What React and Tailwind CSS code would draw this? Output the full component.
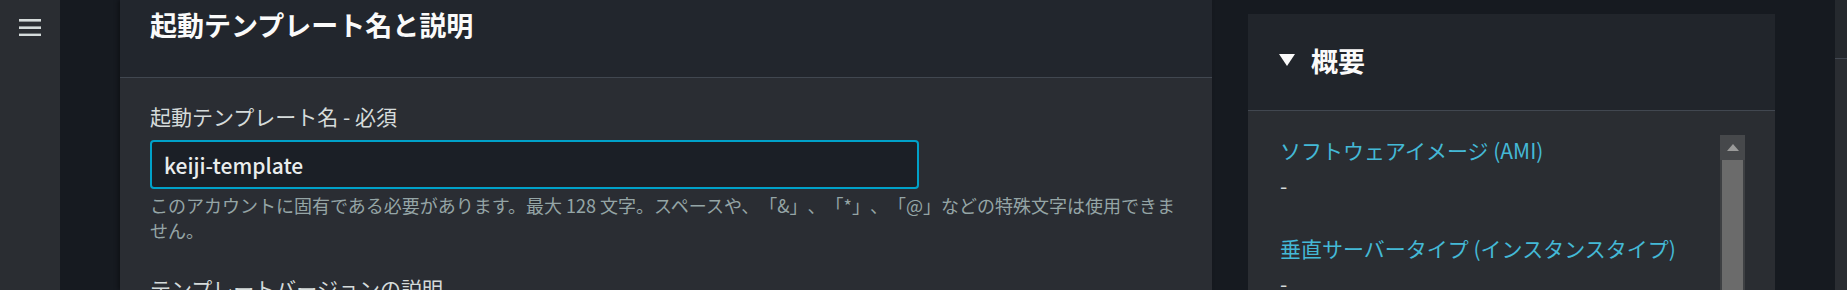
const font = { fontFamily: '"Noto Sans CJK JP", "Noto Sans", sans-serif' };

function Hamburger() {
  return (
    <svg width="22" height="18" viewBox="0 0 22 18" aria-hidden="true">
      <rect x="0" y="1" width="22" height="2.6" fill="#d5dbdb" />
      <rect x="0" y="8.4" width="22" height="2.6" fill="#d5dbdb" />
      <rect x="0" y="15.6" width="22" height="2.6" fill="#d5dbdb" />
    </svg>
  );
}

function MainPanel() {
  return (
    <section className="flex w-[1092px] shrink-0 flex-col bg-[#2a2d33] shadow-[-2px_0_4px_rgba(0,0,0,0.35)]">
      <header className="h-[78px] shrink-0 border-b border-[#414750] bg-[#22262d] px-[30px] pt-[8px]">
        <h2 className="text-[27px] font-bold leading-[33px] text-[#fafafa]">起動テンプレート名と説明</h2>
      </header>

      <div className="shrink-0 px-[30px] pt-[23px]">
        <label className="block text-[21px] leading-[30px] text-[#d5dbdb]">起動テンプレート名 - 必須</label>
        <div className="mt-[9px] flex h-[49px] w-[769px] items-center rounded-[4px] border-2 border-[#00a1c9] bg-[#1b1f26] px-[12px]">
          <span className="text-[21px] font-medium leading-[30px] text-[#eaeded]">keiji-template</span>
        </div>
        <p className="mt-[4px] text-[18px] leading-[25px] text-[#95a5a6] [text-spacing-trim:space-all]">
          <span className="block whitespace-nowrap">
            このアカウントに固有である必要があります。最大 128 文字。スペースや、「&」、「*」、「@」などの特殊文字は使用できま
          </span>
          <span className="block">せん。</span>
        </p>
        <label className="mt-[30px] block text-[21px] leading-[30px] text-[#d5dbdb]">テンプレートバージョンの説明</label>
      </div>
    </section>
  );
}

function Scrollbar() {
  return (
    <div className="flex w-[25px] shrink-0 flex-col bg-[#3e4043]">
      <div className="flex h-[25px] shrink-0 items-center justify-center bg-[#46484b]">
        <svg width="12" height="7" viewBox="0 0 12 7" aria-hidden="true">
          <path d="M6 0 L12 7 L0 7 Z" fill="#9a9a9a" />
        </svg>
      </div>
      <div className="mx-[2px] flex-1 bg-[#6b6b6b]" />
    </div>
  );
}

function SummaryPanel() {
  return (
    <aside className="mt-[14px] flex w-[527px] shrink-0 flex-col bg-[#2a2d32]">
      <header className="flex h-[97px] shrink-0 items-center gap-[16px] border-b border-[#414750] bg-[#21252b] pl-[31px] pb-[4px]">
        <svg width="16" height="12" viewBox="0 0 16 12" aria-hidden="true">
          <path d="M0 0 L16 0 L8 12 Z" fill="#fafafa" />
        </svg>
        <h2 className="text-[27px] font-bold leading-[33px] text-[#fafafa]">概要</h2>
      </header>
      <div className="flex flex-1 shrink-0 pl-[32px] pr-[30px] pt-[24px]">
        <dl className="flex-1">
          <dt className="text-[21px] leading-[30px] text-[#44b9d6]">ソフトウェアイメージ (AMI)</dt>
          <dd className="mt-[5px] text-[21px] leading-[30px] text-[#d5dbdb]">-</dd>
          <dt className="mt-[33px] text-[21px] leading-[30px] text-[#44b9d6]">垂直サーバータイプ (インスタンスタイプ)</dt>
          <dd className="mt-[5px] text-[21px] leading-[30px] text-[#d5dbdb]">-</dd>
        </dl>
        <Scrollbar />
      </div>
    </aside>
  );
}

export default function App() {
  return (
    <div className="flex h-[290px] w-[1847px] overflow-hidden bg-[#161a20]" style={font}>
      <nav className="flex w-[60px] shrink-0 justify-center bg-[#2a2d32] pt-[18px]">
        <div>
          <Hamburger />
        </div>
      </nav>
      <div className="w-[60px] shrink-0" />
      <MainPanel />
      <div className="w-[36px] shrink-0" />
      <SummaryPanel />
      <div className="w-[60px] shrink-0" />
      <div className="w-[12px] shrink-0 bg-[#2a2d32]">
        <div className="h-[59px] border-b border-[#414750] bg-[#25292e]" />
      </div>
    </div>
  );
}
